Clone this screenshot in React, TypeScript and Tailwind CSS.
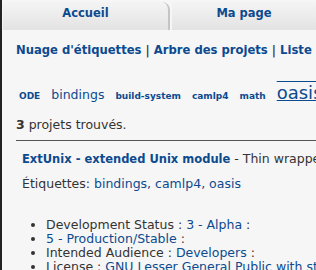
const font = { fontFamily: '"DejaVu Sans", Verdana, sans-serif' };

const tags = [
  { t: "ODE", c: "text-[9px] font-bold" },
  { t: "bindings", c: "text-[12.5px]" },
  { t: "build-system", c: "text-[9px] font-bold" },
  { t: "camlp4", c: "text-[9px] font-bold" },
  { t: "math", c: "text-[9px] font-bold" },
  { t: "oasis", c: "text-[18px] [text-decoration-line:underline_overline]" },
];

export default function App() {
  return (
    <div className="w-[316px] h-[270px] overflow-hidden bg-[#f6f6f6] border-l-2 border-[#222] text-[#333]" style={font}>
      <div className="flex pt-[2px] h-[30px] pl-[1px]">
        <div className="w-[167px] flex justify-center pt-[3px] rounded-tr-[8px] border-r-2 border-[#c4c4c4] bg-gradient-to-b from-[#f4f4f4] to-[#e3e3e3]">
          <span className="text-[11.5px] font-bold text-[#0c4a8f]">Accueil</span>
        </div>
        <div className="flex-1 ml-[2px] flex justify-center pt-[3px] bg-gradient-to-b from-[#f4f4f4] to-[#e3e3e3]">
          <span className="text-[11.5px] font-bold text-[#0c4a8f]">Ma page</span>
        </div>
      </div>

      <div className="pl-[14px]">
        <div className="mt-[12px] whitespace-nowrap text-[11.6px] font-bold text-[#0c4a8f] leading-[16px]">
          Nuage d'étiquettes <span className="text-[#444]">|</span> Arbre des projets <span className="text-[#444]">|</span> Liste
        </div>

        <div className="mt-[21px] pl-[3px] flex items-baseline gap-[11px] whitespace-nowrap text-[#0c4a8f] h-[26px]">
          {tags.map((x) => (
            <span key={x.t} className={x.c}>{x.t}</span>
          ))}
        </div>

        <div className="mt-[11px] text-[12.5px] text-[#333]">
          <b>3</b> projets trouvés.
        </div>
        <div className="mt-[5px] h-px bg-[#555]" />

        <div className="pl-[6px]">
          <div className="mt-[9px] whitespace-nowrap text-[12.5px]">
            <span className="font-bold text-[11.5px] text-[#0c4a8f]">ExtUnix - extended Unix module</span> - Thin wrapper
          </div>
          <div className="mt-[6px] text-[12.5px] whitespace-nowrap">
            Étiquettes: <span className="text-[#0c4a8f]">bindings, camlp4, oasis</span>
          </div>
          <ul className="mt-[25px] list-disc pl-[24px] text-[12.5px] leading-[14px] whitespace-nowrap">
            <li>Development Status : <span className="text-[#0c4a8f]">3 - Alpha</span> :</li>
            <li><span className="text-[#0c4a8f]">5 - Production/Stable</span> :</li>
            <li>Intended Audience : <span className="text-[#0c4a8f]">Developers</span> :</li>
            <li>License : <span className="text-[#0c4a8f]">GNU Lesser General Public with static</span></li>
          </ul>
        </div>
      </div>
    </div>
  );
}
